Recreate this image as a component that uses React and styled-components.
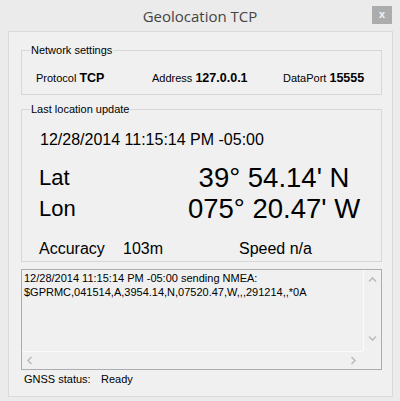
import React from 'react';
import styled, { createGlobalStyle } from 'styled-components';

const Global = createGlobalStyle`
  html, body { margin: 0; padding: 0; background: #ebebeb; }
  body { font-family: "Liberation Sans", Arial, sans-serif; color: #000; }
`;

const Window = styled.div`
  width: 400px;
  height: 401px;
  background: #ebebeb;
  display: flex;
  flex-direction: column;
  overflow: hidden;
`;

const TitleBar = styled.div`
  height: 31px;
  flex: none;
  display: grid;
  grid-template-columns: 1fr auto 1fr;
  align-items: center;
`;

const Title = styled.div`
  grid-column: 2;
  font-family: "Open Sans", "Noto Sans", sans-serif;
  font-size: 15px;
  line-height: 20px;
  color: #444;
`;

const CloseButton = styled.div`
  grid-column: 3;
  justify-self: end;
  align-self: start;
  margin: 6px 8px 0 0;
  width: 20px;
  height: 18px;
  background: #acacac;
  color: #ececec;
  font-family: "DejaVu Sans", sans-serif;
  font-size: 10px;
  font-weight: bold;
  line-height: 17px;
  text-align: center;
`;

const Client = styled.div`
  margin: 0 7px 0 8px;
  border: 1px solid #d9d9d9;
  background: #f0f0f0;
  padding: 0 10px 10px 12px;
  display: flex;
  flex-direction: column;
`;

const Group = styled.fieldset`
  margin: ${p => p.$top}px 0 0 0;
  padding: ${p => p.$pt}px 0 ${p => p.$pb}px 8px;
  border: 1px solid #d7d7d7;
  min-width: 0;
`;

const Legend = styled.legend`
  padding: 0 1px;
  font-size: 11px;
  line-height: 13px;
`;

const NetRow = styled.div`
  display: grid;
  grid-template-columns: 116px 131px auto;
  padding-left: 6px;
  font-size: 11px;
  line-height: 16px;
  white-space: nowrap;
`;

const Value = styled.b`
  font-size: 12.5px;
`;

const DateLine = styled.div`
  margin-top: 14px;
  padding-left: 10px;
  font-size: 16px;
  line-height: 20px;
`;

const CoordRow = styled.div`
  display: grid;
  grid-template-columns: 132px 1fr;
  align-items: center;
  margin-top: ${p => p.$top || 0}px;
  padding: 0 4px 0 9px;
  height: 31px;
`;

const CoordLabel = styled.div`
  font-size: 22px;
  line-height: 31px;
`;

const CoordValue = styled.div`
  font-size: 27.5px;
  line-height: 31px;
  text-align: center;
  white-space: nowrap;
`;

const StatRow = styled.div`
  display: grid;
  grid-template-columns: 84px 116px auto;
  margin-top: 15px;
  padding-left: 9px;
  font-size: 16px;
  line-height: 20px;
  white-space: nowrap;
`;

const LogBox = styled.div`
  margin-top: 7px;
  height: 101px;
  box-sizing: border-box;
  border: 1px solid #abadb3;
  background: #f0f0f0;
  display: grid;
  grid-template-columns: 1fr 18px;
  grid-template-rows: 1fr 18px;
`;

const LogText = styled.div`
  padding: 1px 2px;
  font-size: 11px;
  line-height: 14px;
  white-space: pre;
  overflow: hidden;
`;

const VScroll = styled.div`
  border-left: 1px solid #fafafa;
  display: flex;
  flex-direction: column;
  justify-content: space-between;
  align-items: center;
  padding: 6px 0 8px;
`;

const HScroll = styled.div`
  border-top: 1px solid #fafafa;
  display: flex;
  justify-content: space-between;
  align-items: center;
  padding: 0 5px 0 4px;
`;

const Corner = styled.div`
  background: #f0f0f0;
`;

const StatusRow = styled.div`
  display: grid;
  grid-template-columns: 77px auto;
  margin-top: 2px;
  padding-left: 3px;
  font-size: 11px;
  line-height: 14px;
`;

const Chevron = ({ dir }) => {
  const paths = {
    up: 'M1 5.5 L4.5 2 L8 5.5',
    down: 'M1 2.5 L4.5 6 L8 2.5',
    left: 'M5.5 1 L2 4.5 L5.5 8',
    right: 'M2.5 1 L6 4.5 L2.5 8',
  };
  return (
    <svg width="9" height="9" viewBox="0 0 9 9">
      <path d={paths[dir]} fill="none" stroke="#bdbdbd" strokeWidth="1.6" />
    </svg>
  );
};

export default function App() {
  return (
    <>
      <Global />
      <Window>
        <TitleBar>
          <Title>Geolocation TCP</Title>
          <CloseButton>x</CloseButton>
        </TitleBar>
        <Client>
          <Group $top={12} $pt={13} $pb={8}>
            <Legend>Network settings</Legend>
            <NetRow>
              <span>Protocol <Value>TCP</Value></span>
              <span>Address <Value>127.0.0.1</Value></span>
              <span>DataPort <Value>15555</Value></span>
            </NetRow>
          </Group>
          <Group $top={8} $pt={0} $pb={2}>
            <Legend>Last location update</Legend>
            <DateLine>12/28/2014 11:15:14 PM -05:00</DateLine>
            <CoordRow $top={12}>
              <CoordLabel>Lat</CoordLabel>
              <CoordValue>39° 54.14' N</CoordValue>
            </CoordRow>
            <CoordRow>
              <CoordLabel>Lon</CoordLabel>
              <CoordValue>075° 20.47' W</CoordValue>
            </CoordRow>
            <StatRow>
              <span>Accuracy</span>
              <span>103m</span>
              <span>Speed n/a</span>
            </StatRow>
          </Group>
          <LogBox>
            <LogText>
              {'12/28/2014 11:15:14 PM -05:00 sending NMEA:\n$GPRMC,041514,A,3954.14,N,07520.47,W,,,291214,,*0A'}
            </LogText>
            <VScroll>
              <Chevron dir="up" />
              <Chevron dir="down" />
            </VScroll>
            <HScroll>
              <Chevron dir="left" />
              <Chevron dir="right" />
            </HScroll>
            <Corner />
          </LogBox>
          <StatusRow>
            <span>GNSS status:</span>
            <span>Ready</span>
          </StatusRow>
        </Client>
      </Window>
    </>
  );
}
